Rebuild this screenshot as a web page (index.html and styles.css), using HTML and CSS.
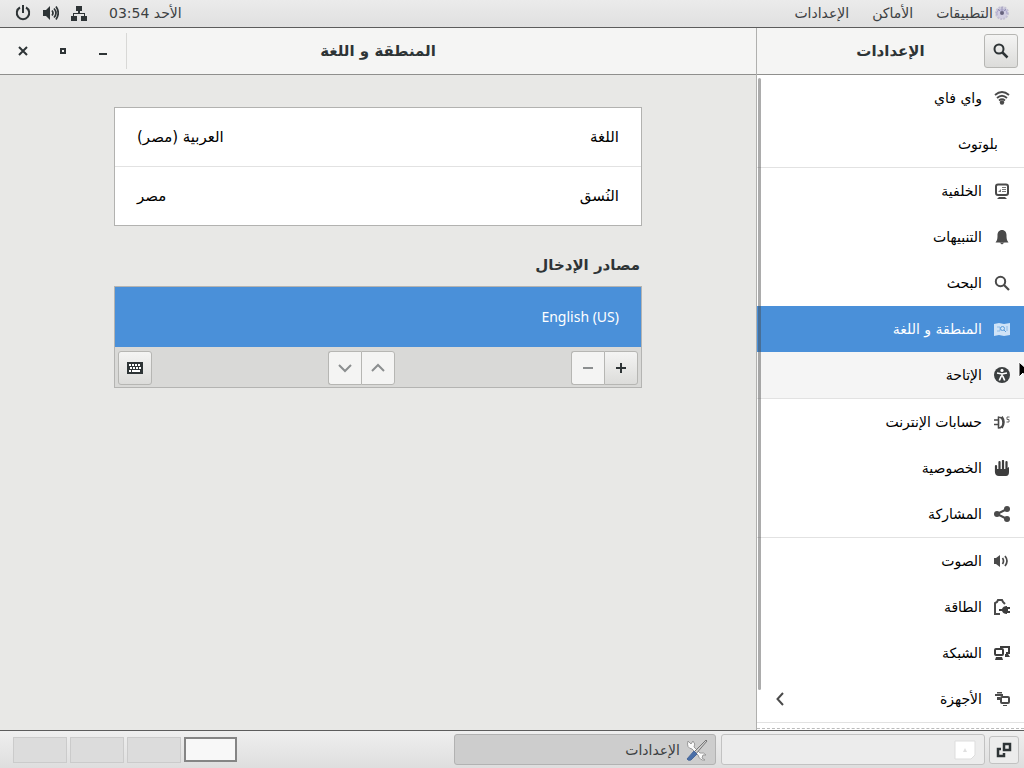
FILE: index.html
```html
<!DOCTYPE html>
<html lang="ar" dir="rtl">
<head>
<meta charset="utf-8">
<meta name="viewport" content="width=device-width, initial-scale=1">
<title>الإعدادات</title>
<link rel="stylesheet" href="styles.css">
</head>
<body>
<div class="desktop">
  <header class="topbar">
    <nav class="topbar-menus">
      <button class="menu menu-apps"><svg class="gear" viewBox="0 0 16 16"><circle cx="8" cy="8" r="6" fill="#d2cfe2" stroke="#c4c1d4" stroke-dasharray="2 1" stroke-width="2"/><path d="M3 10Q2 4 8 5q5-1 5 4" fill="none" stroke="#aaa6cc"/><circle cx="8" cy="8" r="2" fill="#66627c"/><path d="M8 2v4M4 4l3 3M12 4L9 7" stroke="#9793b4"/></svg>التطبيقات</button>
      <button class="menu">الأماكن</button>
      <button class="menu">الإعدادات</button>
    </nav>
    <div class="status">
      <time class="clock" datetime="03:54">الأحد 03:54</time>
      <button class="tray" aria-label="الشبكة"><svg viewBox="0 0 16 16"><path d="M5 1h6v5H9v2h5v3h2v5h-6v-5h3V9H3v2h3v5H0v-5h2V8h5V6H5z" fill="#2e3436"/></svg></button>
      <button class="tray" aria-label="الصوت"><svg viewBox="0 0 16 16"><path d="M0 5h3l4-4v14l-4-4H0z" fill="#2e3436"/><path d="M9 5.500q2 2.500 0 5M11 3.500q4 4.500 0 9M13 1.500q4.500 6.500 0 13" fill="none" stroke="#2e3436" stroke-width="1.700"/></svg></button>
      <button class="tray" aria-label="الطاقة"><svg viewBox="0 0 16 16"><path d="M5 2.500a6.200 6.200 0 1 0 6 0M8 0v8" fill="none" stroke="#2e3436" stroke-width="2"/></svg></button>
    </div>
  </header>

  <div class="window">
    <section class="sidebar">
      <div class="titlebar side-title">
        <button class="button square" aria-label="بحث"><svg class="icon" viewBox="0 0 16 16"><circle cx="6" cy="6" r="4.500" fill="none" stroke="#2e3436" stroke-width="2"/><path d="M9.500 9.500l5 5" stroke="#2e3436" stroke-width="2.500"/></svg></button>
        <h1 class="title">الإعدادات</h1>
      </div>
      <nav class="panels">
        <a class="panel" href="#wifi"><svg class="icon" viewBox="0 0 16 16"><path d="M1 5q7-6 14 0M3 8q5-4.500 10 0M5 10.500q3-2.500 6 0" fill="none" stroke="#4a4a4a" stroke-width="1.800"/><circle cx="8" cy="12.500" r="2.200" fill="#4a4a4a"/></svg>واي فاي</a>
        <a class="panel last" href="#bluetooth"><span class="no-icon"></span>بلوتوث</a>
        <a class="panel" href="#background"><svg class="icon" viewBox="0 0 16 16"><rect x="2" y="1.500" width="12" height="10.500" rx="2" fill="none" stroke="#4a4a4a" stroke-width="2"/><path d="M4 9l3-3v3zM8 4h4v1H8zM8 6h4v1H8zM8 8h4v1H8z" fill="#777"/><path d="M5 14h6l2 2H3z" fill="#4a4a4a"/></svg>الخلفية</a>
        <a class="panel" href="#notifications"><svg class="icon" viewBox="0 0 16 16"><path d="M8 1c3 0 4.500 2.500 4.500 5 0 3 0 5 2 7.500h-13c2-2.500 2-4.500 2-7.500 0-2.500 1.500-5 4.500-5z" fill="#4a4a4a"/><path d="M5.500 13.500h5L8 15.500z" fill="#4a4a4a"/></svg>التنبيهات</a>
        <a class="panel" href="#search"><svg class="icon" viewBox="0 0 16 16"><circle cx="6.500" cy="6.500" r="4.700" fill="none" stroke="#4a4a4a" stroke-width="2"/><path d="M10 10l5 5" stroke="#4a4a4a" stroke-width="2.200"/></svg>البحث</a>
        <a class="panel selected" href="#region" aria-current="page"><svg class="icon" viewBox="0 0 16 16"><path d="M0 3l5-1 5 1 6-1v12l-6 1-5-1-5 1z" fill="#cfe3f7"/><path d="M3 6h3v4H3M13 5v5" fill="none" stroke="#8bbae8"/><circle cx="8.500" cy="7.500" r="2" fill="none" stroke="#5c9edc"/><path d="M10 9l2 2" stroke="#5c9edc"/></svg>المنطقة و اللغة</a>
        <a class="panel hovered last" href="#access"><svg class="icon" viewBox="0 0 16 16"><circle cx="8" cy="8" r="8" fill="#3b3f40"/><circle cx="8" cy="3.400" r="1.600" fill="#fff"/><path d="M3 6l5 1 5-1M8 6.500v3M7.300 9l-2 4.500M8.700 9l2 4.500" fill="none" stroke="#fff" stroke-width="1.700"/></svg>الإتاحة</a>
        <a class="panel" href="#accounts"><svg class="icon" viewBox="0 0 16 16"><path d="M0 6h4M0 10.500h4M4.500 2.500v12M4 3q5 0 5 5.500T4 14M8 2.500q4 5.500 0 11.500" fill="none" stroke="#4a4a4a" stroke-width="1.600"/><path d="M15.500 3H13v2.500h2V8h-2.500" fill="none" stroke="#666"/></svg>حسابات الإنترنت</a>
        <a class="panel" href="#privacy"><svg class="icon" viewBox="0 0 16 16"><path d="M2 6v6M5.500 2v9M9 1v9M12.500 2v9" stroke="#3d3d3d" stroke-width="2.200" stroke-linecap="round"/><path d="M1 9h10.500l3.500-2v5q0 4-3 4H5q-4 0-4-4z" fill="#3d3d3d"/></svg>الخصوصية</a>
        <a class="panel last" href="#sharing"><svg class="icon" viewBox="0 0 16 16"><path d="M13 3L3 8l10 5" fill="none" stroke="#4a4a4a" stroke-width="2"/><circle cx="13" cy="3" r="3" fill="#4a4a4a"/><circle cx="3" cy="8" r="3" fill="#4a4a4a"/><circle cx="13" cy="13" r="3" fill="#4a4a4a"/></svg>المشاركة</a>
        <a class="panel" href="#sound"><svg class="icon" viewBox="0 0 16 16"><path d="M0 5h2l4-3v12l-4-3H0z" fill="#4a4a4a"/><path d="M8.500 5q2 3 0 6M11 3q4 5 0 10" fill="none" stroke="#4a4a4a" stroke-width="1.700"/></svg>الصوت</a>
        <a class="panel" href="#power"><svg class="icon" viewBox="0 0 16 16"><path d="M6 15H1V4l2-1 1-2h4l1 2 2 2" fill="none" stroke="#4a4a4a" stroke-width="2"/><path d="M5 10h3q1-3 5-3v1h3v2h-2v2h2v2h-3v1q-4 0-5-3H5z" fill="#3d3d3d"/></svg>الطاقة</a>
        <a class="panel" href="#network"><svg class="icon" viewBox="0 0 16 16"><rect x="1" y="4" width="8" height="6" rx="1" fill="none" stroke="#3d3d3d" stroke-width="2"/><path d="M6 2h9v6h-3" fill="none" stroke="#3d3d3d" stroke-width="2"/><path d="M2 12h6l1 3H1zM11 9h3l2 3h-5z" fill="#3d3d3d"/></svg>الشبكة</a>
        <a class="panel last" href="#devices"><svg class="icon" viewBox="0 0 16 16"><path d="M3 1h5v1.500H3zM1 3h8v2H1zM3 6h3v3H3z" fill="#4a4a4a"/><rect x="7" y="6" width="8" height="6" rx="1" fill="none" stroke="#4a4a4a" stroke-width="2"/><path d="M9 14h4v1H9z" fill="#4a4a4a"/></svg>الأجهزة<svg class="icon chevron" viewBox="0 0 16 16"><path d="M11 2L5.500 8l5.500 6" fill="none" stroke="#4a4a4a" stroke-width="2"/></svg></a>
        <span class="more"></span>
        <span class="scroll-thumb"></span>
      </nav>
    </section>

    <section class="page">
      <div class="titlebar page-title">
        <h2 class="title">المنطقة و اللغة</h2>
        <div class="controls">
          <button class="control" aria-label="تصغير"><svg class="icon" viewBox="0 0 16 16"><path d="M4 10h8v2H4z" fill="#2e3436"/></svg></button>
          <button class="control" aria-label="تكبير"><svg class="icon" viewBox="0 0 16 16"><rect x="6" y="6" width="4" height="4" fill="none" stroke="#2e3436" stroke-width="2"/></svg></button>
          <button class="control" aria-label="إغلاق"><svg class="icon" viewBox="0 0 16 16"><path d="M4 4l8 8M12 4l-8 8" stroke="#2e3436" stroke-width="2"/></svg></button>
        </div>
      </div>
      <main class="content">
        <div class="card">
          <button class="card-row"><span>اللغة</span><span>العربية (مصر)</span></button>
          <button class="card-row"><span>النُسق</span><span>مصر</span></button>
        </div>
        <h3 class="heading">مصادر الإدخال</h3>
        <div class="sources">
          <button class="source"><bdi>English (US)</bdi></button>
          <div class="tools">
            <div class="linked">
              <button class="button square" aria-label="إضافة"><svg class="icon" viewBox="0 0 16 16"><path d="M3 8h10M8 3v10" stroke="#2e3436" stroke-width="2"/></svg></button>
              <button class="button square" aria-label="إزالة" disabled><svg class="icon" viewBox="0 0 16 16"><path d="M3 8h10" stroke="#8b8e8f" stroke-width="2"/></svg></button>
            </div>
            <div class="linked">
              <button class="button square" aria-label="أعلى" disabled><svg class="icon" viewBox="0 0 16 16"><path d="M2 11l6-6 6 6" fill="none" stroke="#8b8e8f" stroke-width="2"/></svg></button>
              <button class="button square" aria-label="أسفل" disabled><svg class="icon" viewBox="0 0 16 16"><path d="M2 5l6 6 6-6" fill="none" stroke="#8b8e8f" stroke-width="2"/></svg></button>
            </div>
            <button class="button square" aria-label="لوحة المفاتيح"><svg class="icon" viewBox="0 0 16 16"><path d="M0 2h16v12H0z" fill="#2e3436"/><path d="M2 5h12M3 8h11M2 11h12" stroke="#fff" stroke-width="2" stroke-dasharray="2 1"/><path d="M5 11h6" stroke="#fff" stroke-width="2"/></svg></button>
          </div>
        </div>
      </main>
    </section>
  </div>

  <footer class="taskbar">
    <button class="task task-show" aria-label="إظهار سطح المكتب"><svg class="icon" viewBox="0 0 16 16"><path d="M8 2h6v6H8z" fill="none" stroke="#2e3436" stroke-width="2.500"/><path d="M5 7H2v7h6v-3" fill="none" stroke="#2e3436" stroke-width="2.500"/></svg></button>
    <button class="task task-idle" aria-label="نافذة"><svg class="file" viewBox="0 0 22 20"><path d="M1 1h20v14l-4 4H1z" fill="#fff" stroke="#ddd"/><path d="M9 12l2-4 2 4z" fill="#e0e0e0"/></svg></button>
    <button class="task task-active"><svg class="tool-icon" viewBox="0 0 22 22"><path d="M2 2l3 3 2-3q3 3 1 6l6 6q4-1 6 2l-3 0-1 3 3 2q-5 1-7-5L6 10Q0 9 2 2z" fill="#fafafa" stroke="#999"/><path d="M20 1l1 1-12 14-2-2z" fill="#ccc" stroke="#777"/><path d="M8 12l3 3-6 6q-3 1-4-1z" fill="#496fa8" stroke="#4a6799"/></svg>الإعدادات</button>
    <div class="workspaces">
      <button class="workspace current" aria-label="مساحة العمل 1"></button>
      <button class="workspace" aria-label="مساحة العمل 2"></button>
      <button class="workspace" aria-label="مساحة العمل 3"></button>
      <button class="workspace" aria-label="مساحة العمل 4"></button>
    </div>
  </footer>
  <svg class="pointer" viewBox="0 0 12 18"><path d="M1 1v15l4-4 2 5 2-1-2-5h5z" fill="#000" stroke="#fff"/></svg>
</div>
</body>
</html>
```

FILE: styles.css
```css
* {
  box-sizing: border-box;
}

body {
  margin: 0;
  font-family: "DejaVu Sans", sans-serif;
  font-size: 14px;
  line-height: 20px;
  color: #000;
}

button {
  margin: 0;
  padding: 0;
  border: 0;
  background: none;
  font: inherit;
  color: inherit;
}

svg {
  display: block;
  flex: none;
}

.icon {
  width: 16px;
  height: 16px;
}

.desktop {
  position: relative;
  display: flex;
  flex-direction: column;
  height: 100vh;
  overflow: hidden;
}

/* Top bar */
.topbar {
  display: flex;
  justify-content: space-between;
  align-items: center;
  height: 28px;
  flex: none;
  padding: 0 14px 2px 15px;
  border-bottom: 1px solid #5c5c5c;
  background: linear-gradient(#ebebeb, #e0e0e0);
  color: #3c4042;
}

.topbar-menus,
.status {
  display: flex;
  align-items: center;
}

.topbar-menus {
  gap: 23px;
}

.menu {
  display: flex;
  align-items: center;
  gap: 1px;
}

.gear {
  width: 16px;
  height: 16px;
}

.status {
  gap: 12px;
}

.clock {
  margin-left: 10px;
}

.tray svg {
  width: 16px;
  height: 16px;
}

/* Window */
.window {
  display: flex;
  flex: 1;
  min-height: 0;
}

.sidebar {
  display: flex;
  flex-direction: column;
  flex: none;
  width: 268px;
  border-left: 1px solid #b0b0ae;
  background: #fff;
}

.page {
  display: flex;
  flex-direction: column;
  flex: 1;
  min-width: 0;
  background: #e8e8e6;
}

.titlebar {
  display: grid;
  grid-template-columns: 1fr auto 1fr;
  align-items: center;
  height: 47px;
  flex: none;
  border-bottom: 1px solid #8f8f8d;
  background: #f5f5f4;
}

.title {
  grid-column: 2;
  margin: 0;
  font-size: 15px;
  font-weight: bold;
  color: #2e3436;
}

.side-title {
  padding: 0 6px;
}

.controls {
  justify-self: end;
  display: flex;
  gap: 16px;
  padding: 5px 11px;
  border-right: 1px solid #d8d8d6;
}

.control {
  display: grid;
  place-items: center;
  width: 24px;
  height: 26px;
}

.button {
  display: grid;
  place-items: center;
  border: 1px solid #b6b6b3;
  border-radius: 3px;
  background: linear-gradient(#f4f4f3, #dcdcda);
}

.button:disabled {
  background: #f4f4f3;
}

.square {
  width: 34px;
  height: 34px;
}

/* Panel list */
.panels {
  position: relative;
  flex: 1;
  min-height: 0;
  overflow: hidden;
}

.panel {
  display: flex;
  align-items: center;
  gap: 12px;
  height: 46px;
  padding: 0 14px 0 15px;
  color: #000;
  text-decoration: none;
}

.last {
  height: 47px;
  border-bottom: 1px solid #e2e2e2;
}

.selected {
  background: #4a90d9;
  color: #fff;
}

.hovered {
  background: #f5f5f5;
}

.chevron {
  margin-right: auto;
}

.more {
  display: block;
  height: 6px;
  border-bottom: 1px dashed #bbb;
}

.scroll-thumb {
  position: absolute;
  top: 3px;
  bottom: 40px;
  left: 1px;
  width: 3px;
  border-radius: 2px;
  background: rgba(70, 70, 70, 0.45);
}

/* Page content */
.content {
  width: 100%;
  max-width: 528px;
  margin: 0 auto;
  padding-top: 32px;
}

.card {
  border: 1px solid #b2b2b0;
  background: #fff;
  font-size: 15px;
}

.card-row {
  display: flex;
  justify-content: space-between;
  align-items: center;
  width: 100%;
  height: 58px;
  padding: 0 22px;
}

.card-row + .card-row {
  height: 59px;
  border-top: 1px solid #e2e2e2;
}

.heading {
  margin: 29px 0 11px;
  padding-right: 2px;
  font-size: 15px;
  font-weight: bold;
  color: #2e3436;
}

.sources {
  border: 1px solid #b4b4b2;
  background: #d9d9d7;
}

.source {
  display: block;
  width: 100%;
  height: 60px;
  padding: 0 22px;
  background: #4a90d9;
  color: #fff;
  font-family: "Noto Sans", sans-serif;
  text-align: right;
}

.tools {
  display: flex;
  justify-content: space-between;
  padding: 4px 3px 2px;
}

.linked {
  display: flex;
}

.linked .button + .button {
  border-right: 0;
  width: 33px;
  border-radius: 3px 0 0 3px;
}

.linked .button:first-child {
  border-radius: 0 3px 3px 0;
}

/* Taskbar */
.taskbar {
  display: flex;
  align-items: center;
  height: 38px;
  flex: none;
  padding: 0 5px 0 13px;
  border-top: 1px solid #5c5c5c;
  background: linear-gradient(#efefef, #dedede);
}

.task {
  display: flex;
  align-items: center;
  height: 31px;
  border: 1px solid #c2c2c2;
  border-radius: 3px;
  background: #ececec;
}

.task-show {
  justify-content: center;
  width: 30px;
  height: 28px;
  margin-left: 4px;
}

.task-idle {
  flex: 0 1 264px;
  margin-left: 5px;
  padding: 0 8px;
}

.task-active {
  flex: 0 1 262px;
  gap: 6px;
  padding: 0 7px;
  border-color: #b2b2b2;
  background: #cdcdcd;
  color: #3c4042;
}

.file {
  width: 22px;
  height: 20px;
}

.tool-icon {
  width: 22px;
  height: 22px;
}

.workspaces {
  display: flex;
  align-items: center;
  gap: 3px;
  margin-right: auto;
}

.workspace {
  width: 54px;
  height: 26px;
  border: 1px solid #cbcbcb;
  background: #dcdcdc;
}

.current {
  width: 53px;
  height: 25px;
  border: 2px solid #858585;
  background: #f8f8f8;
}

.pointer {
  position: absolute;
  top: 361px;
  left: 1018px;
  width: 12px;
  height: 18px;
}
```
